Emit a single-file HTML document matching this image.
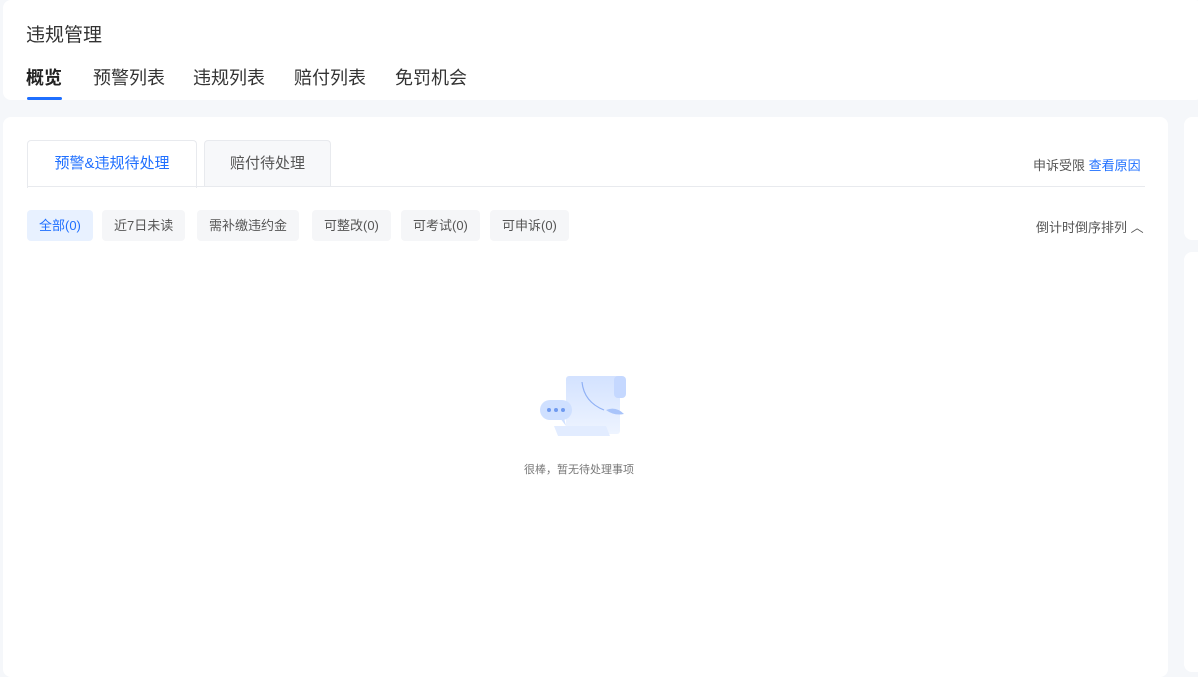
<!DOCTYPE html>
<html><head><meta charset="utf-8"><style>
*{margin:0;padding:0;box-sizing:border-box}
body{width:1198px;height:665px;overflow:hidden;background:#f5f7fa;font-family:"Liberation Sans","Noto Sans CJK SC",sans-serif;position:relative}
.hdr{position:absolute;left:3px;top:0;width:1200px;height:100px;background:#fff;border-radius:8px}
.title{position:absolute;left:26px;top:20px;font-size:19px;color:#333}
.nav{position:absolute;top:64px;font-size:18px;color:#333}
.ul{position:absolute;left:27px;top:97px;width:35px;height:3px;background:#1f6fff;border-radius:2px}
.main{position:absolute;left:3px;top:117px;width:1165px;height:560px;background:#fff;border-radius:8px}
.side1{position:absolute;left:1184px;top:117px;width:30px;height:123px;background:#fff;border-radius:8px}
.side2{position:absolute;left:1184px;top:252px;width:30px;height:420px;background:#fff;border-radius:8px}
.tab{position:absolute;top:140px;height:47px;border:1px solid #e8eaee;border-bottom:none;border-radius:4px 4px 0 0;font-size:15px;line-height:46px;text-align:center}
.line{position:absolute;left:27px;top:186px;width:1118px;height:1px;background:#e8eaee}
.chip{position:absolute;top:210px;height:31px;line-height:31px;padding:0 12px;background:#f5f6f8;border-radius:4px;font-size:13px;color:#555}
.sm{position:absolute;font-size:13px;color:#555}
</style></head><body>
<div class="hdr"></div>
<div class="title">违规管理</div>
<div class="nav" style="left:26px;font-weight:600;color:#222">概览</div>
<div class="nav" style="left:93px">预警列表</div>
<div class="nav" style="left:193px">违规列表</div>
<div class="nav" style="left:294px">赔付列表</div>
<div class="nav" style="left:395px">免罚机会</div>
<div class="ul"></div>
<div class="main"></div>
<div class="side1"></div><div class="side2"></div>
<div class="tab" style="left:27px;width:170px;background:#fff;color:#1f6fff;height:48px">预警&amp;违规待处理</div>
<div class="tab" style="left:204px;width:127px;background:#f7f8fa;color:#555">赔付待处理</div>
<div class="line"></div>
<div class="sm" style="left:1033px;top:155px">申诉受限 <span style="color:#1f6fff">查看原因</span></div>
<div class="chip" style="left:27px;background:#e8f1ff;color:#1f6fff">全部(0)</div>
<div class="chip" style="left:102px">近7日未读</div>
<div class="chip" style="left:197px">需补缴违约金</div>
<div class="chip" style="left:312px">可整改(0)</div>
<div class="chip" style="left:401px">可考试(0)</div>
<div class="chip" style="left:490px">可申诉(0)</div>
<div class="sm" style="left:1036px;top:217px">倒计时倒序排列 ︿</div>
<svg style="position:absolute;left:538px;top:374px" width="92" height="64" viewBox="0 0 92 64">
<defs><linearGradient id="g" x1="0" y1="0" x2="0" y2="1"><stop offset="0" stop-color="#d3e2ff"/><stop offset="1" stop-color="#eef4ff"/></linearGradient></defs>
<rect x="28" y="2" width="54" height="58" rx="3" fill="url(#g)"/>
<rect x="76" y="2" width="12" height="22" rx="4" fill="#c5d8ff"/>
<path d="M16 52 H68 L72 62 H20 Z" fill="#e2ecff"/>
<path d="M44 8 Q46 28 66 36" stroke="#8fb0f5" stroke-width="1.2" fill="none"/>
<path d="M68 36 Q78 32 86 40 Q76 42 68 36Z" fill="#a9c4fa"/>
<rect x="2" y="26" width="32" height="20" rx="10" fill="#cfe0ff"/>
<path d="M22 44 L28 52 L26 44Z" fill="#cfe0ff"/>
<circle cx="11" cy="36" r="2" fill="#6f9af0"/><circle cx="18" cy="36" r="2" fill="#6f9af0"/><circle cx="25" cy="36" r="2" fill="#6f9af0"/>
</svg>
<div class="sm" style="left:524px;top:461px;font-size:11px;color:#777">很棒，暂无待处理事项</div>
</body></html>
